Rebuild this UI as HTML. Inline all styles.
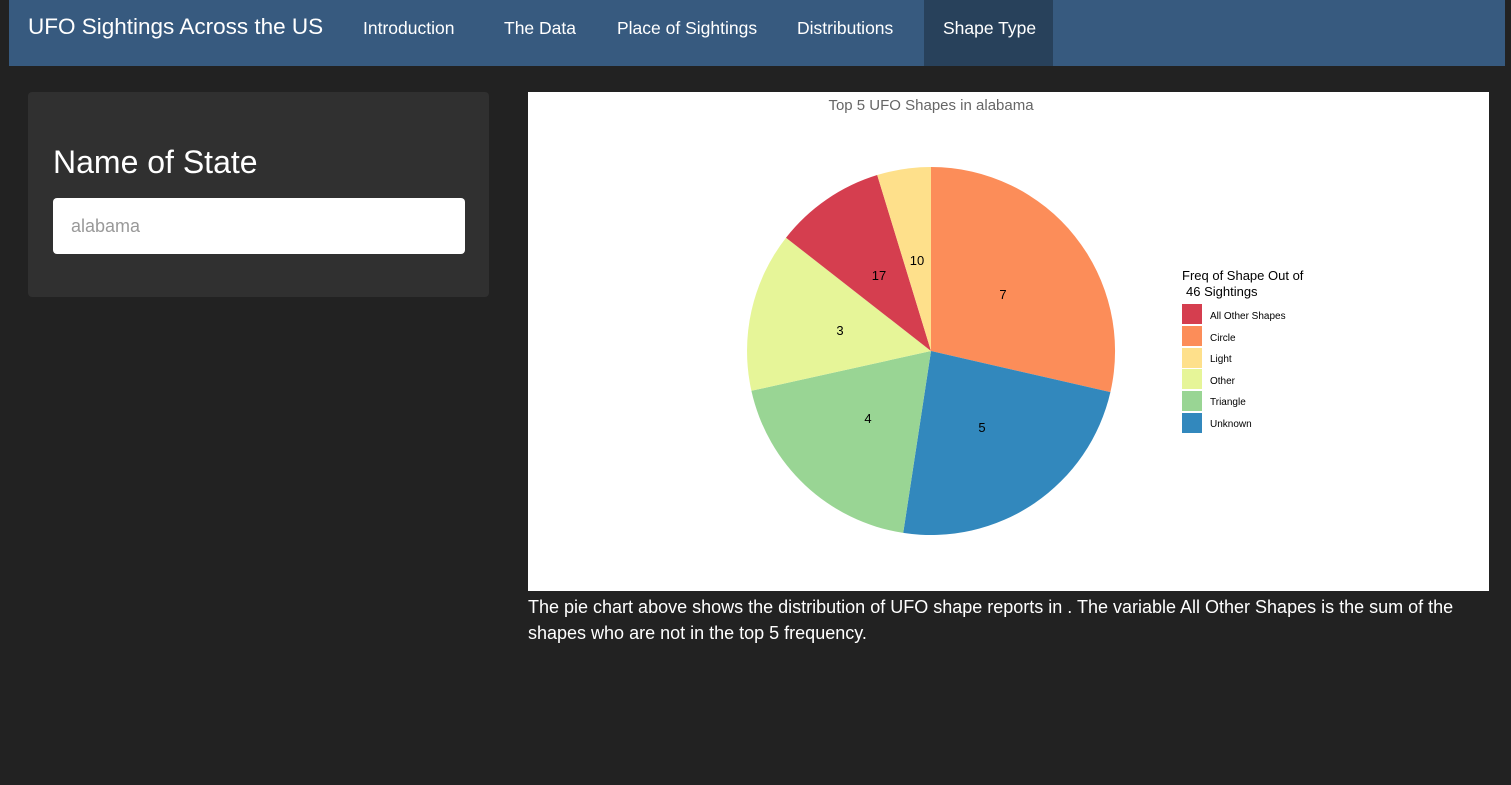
<!DOCTYPE html>
<html><head><meta charset="utf-8"><style>
body{margin:0;background:#222;width:1511px;height:785px;overflow:hidden;font-family:"Liberation Sans",sans-serif;color:#fff}
.nav{position:absolute;left:9px;top:0;width:1496px;height:66px;background:#375a7f}
.nav span{position:absolute;top:0;height:66px;line-height:56px;font-size:17.5px;color:#fff;white-space:nowrap}
.brand{font-size:22.5px!important;left:19px;line-height:54px!important}
.act{background:#28415b;padding:0 19px;width:91px}
.well{position:absolute;left:28px;top:92px;width:461px;height:205px;background:#303030;border-radius:4px}
.well h2{position:absolute;left:25px;top:52px;margin:0;font-size:32px;font-weight:normal}
.inp{position:absolute;left:25px;top:106px;width:412px;height:56px;background:#fff;border-radius:4px;color:#999;font-size:18px;line-height:56px;text-indent:18px}
.plot{position:absolute;left:528px;top:92px;width:961px;height:499px;background:#fff}
.cap{position:absolute;left:528px;top:594px;width:960px;font-size:18px;line-height:26px}
</style></head><body>
<div class="nav">
<span class="brand">UFO Sightings Across the US</span>
<span style="left:354px">Introduction</span>
<span style="left:495px">The Data</span>
<span style="left:608px">Place of Sightings</span>
<span style="left:788px">Distributions</span>
<span class="act" style="left:915px">Shape Type</span>
</div>
<div class="well"><h2>Name of State</h2><div class="inp">alabama</div></div>
<div class="plot">
<svg width="961" height="499" viewBox="528 92 961 499" font-family="Liberation Sans, sans-serif">
<text x="931" y="110" text-anchor="middle" font-size="15" fill="#666">Top 5 UFO Shapes in alabama</text>
<path d="M931 351 L931 167 A184 184 0 0 1 1110.4 392.1Z" fill="#FC8D59"/>
<path d="M931 351 L1110.4 392.1 A184 184 0 0 1 903.2 532.9Z" fill="#3288BD"/>
<path d="M931 351 L903.2 532.9 A184 184 0 0 1 751.4 390.8Z" fill="#99D594"/>
<path d="M931 351 L751.4 390.8 A184 184 0 0 1 786 237.7Z" fill="#E6F598"/>
<path d="M931 351 L786 237.7 A184 184 0 0 1 877.2 175Z" fill="#D53E4F"/>
<path d="M931 351 L877.2 175 A184 184 0 0 1 931 167Z" fill="#FEE08B"/>
<g font-size="13" fill="#000" text-anchor="middle">
<text x="1003" y="299">7</text><text x="982" y="432">5</text><text x="868" y="423">4</text>
<text x="840" y="335">3</text><text x="879" y="280">17</text><text x="917" y="265">10</text></g>
<text x="1182" y="280" font-size="13">Freq of Shape Out of</text>
<text x="1186" y="296" font-size="13">46 Sightings</text>
<g font-size="10">
<rect x="1182" y="304" width="20" height="20" fill="#D53E4F"/><text x="1210" y="319">All Other Shapes</text>
<rect x="1182" y="326" width="20" height="20" fill="#FC8D59"/><text x="1210" y="341">Circle</text>
<rect x="1182" y="348" width="20" height="20" fill="#FEE08B"/><text x="1210" y="362">Light</text>
<rect x="1182" y="369" width="20" height="20" fill="#E6F598"/><text x="1210" y="384">Other</text>
<rect x="1182" y="391" width="20" height="20" fill="#99D594"/><text x="1210" y="405">Triangle</text>
<rect x="1182" y="413" width="20" height="20" fill="#3288BD"/><text x="1210" y="427">Unknown</text>
</g></svg></div>
<div class="cap">The pie chart above shows the distribution of UFO shape reports in . The variable All Other Shapes is the sum of the shapes who are not in the top 5 frequency.</div>
</body></html>
